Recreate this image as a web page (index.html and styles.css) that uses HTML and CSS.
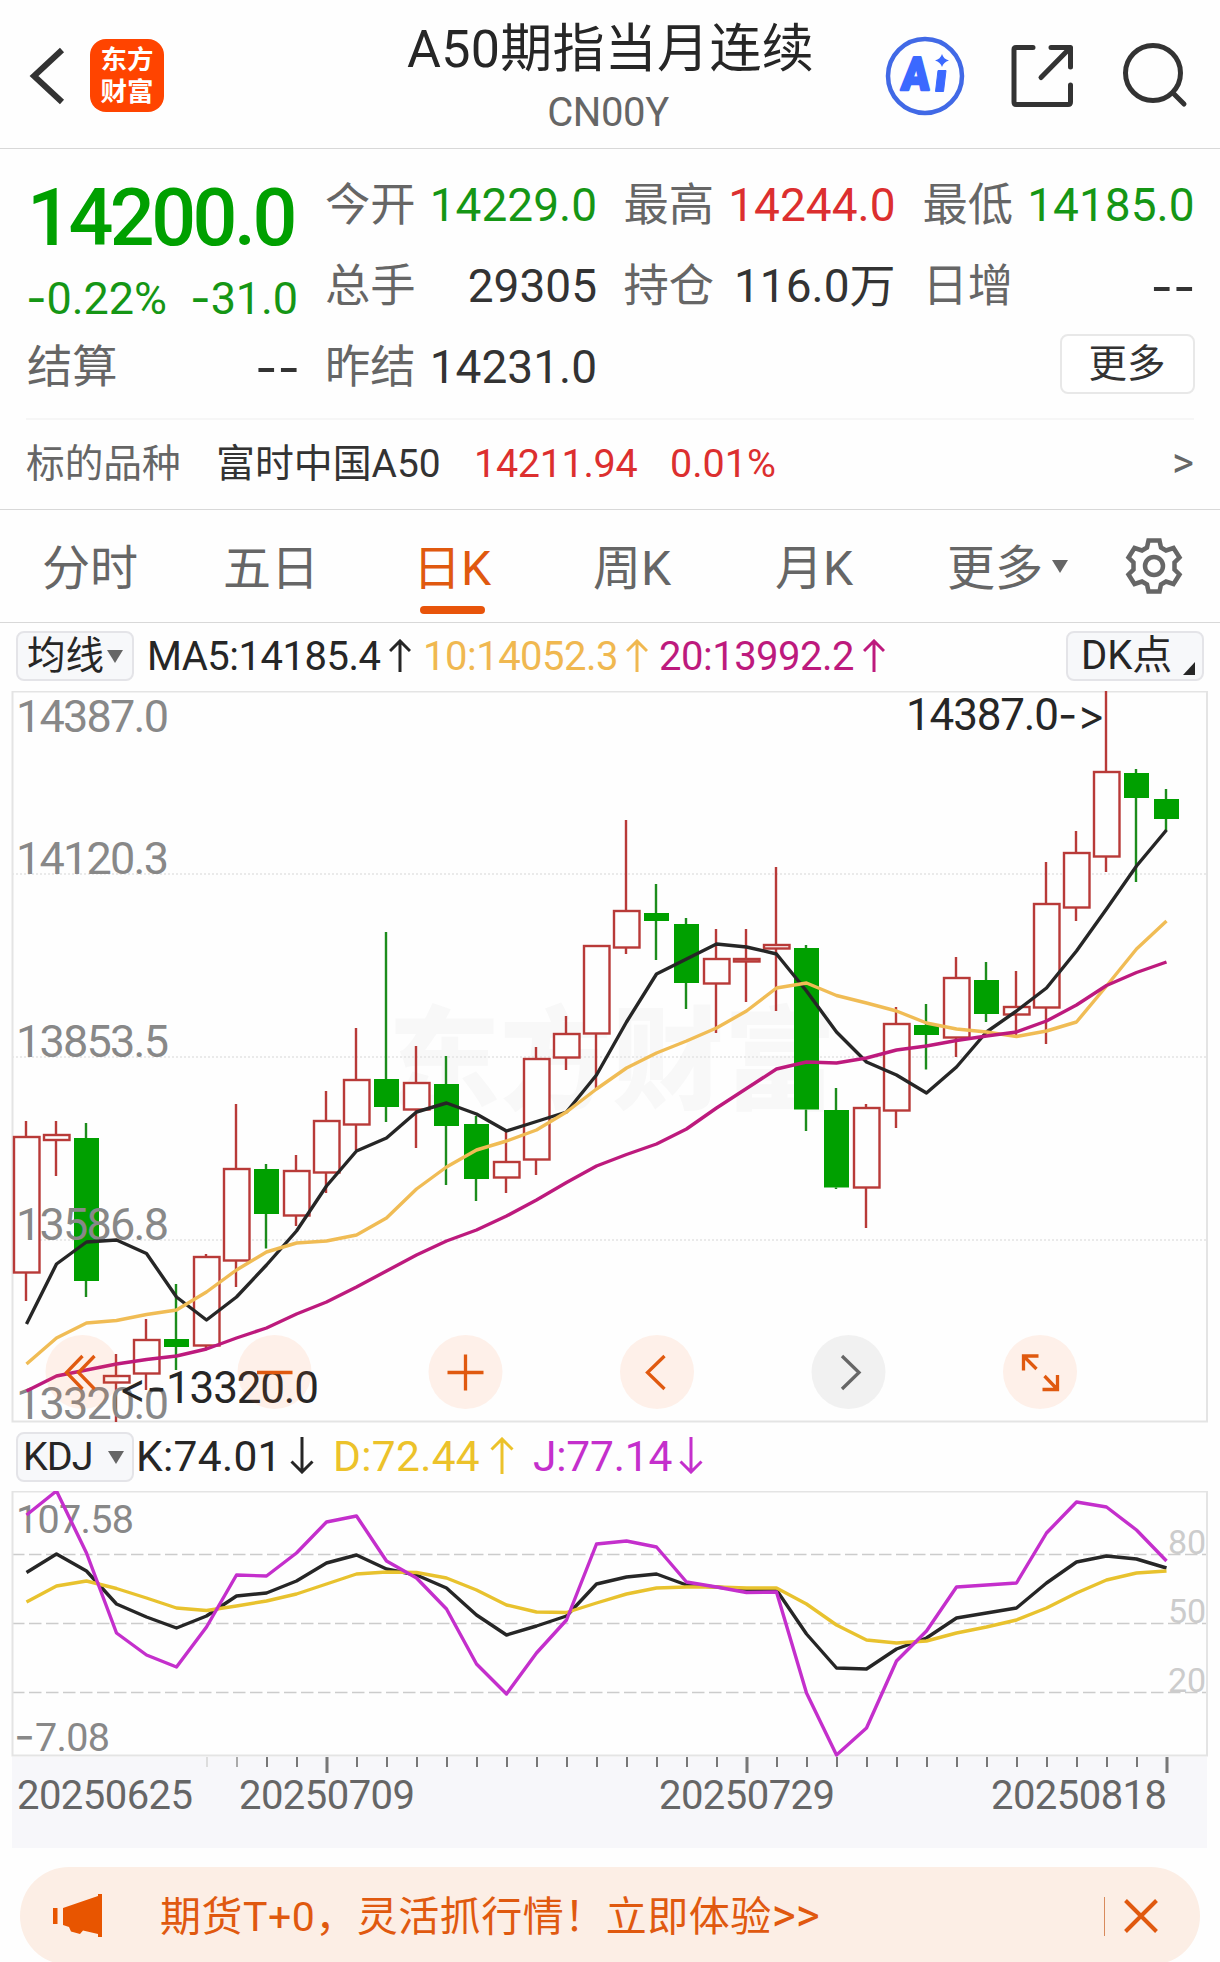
FILE: index.html
```
<!DOCTYPE html>
<html lang="zh-CN">
<head>
<meta charset="utf-8">
<title>A50期指当月连续</title>
<link rel="stylesheet" href="styles.css">
</head>
<body>
<div class="page">
  <header class="header">
    <svg class="back" width="40" height="64" viewBox="0 0 40 64"><path d="M36 6 L8 32 L36 58" transform="translate(-3 0)" fill="none" stroke="#333" stroke-width="6"/></svg>
    <div class="logo"><span>东方</span><span>财富</span></div>
    <div class="heading">
      <h1 class="title">A50期指当月连续</h1>
      <div class="code">CN00Y</div>
    </div>
    <svg class="actions" width="310" height="148" viewBox="880 0 310 148" fill="none">
      <circle cx="925" cy="76" r="37" stroke="#4169e6" stroke-width="4.5"/>
      <text class="ai" x="902" y="90" textLength="28" lengthAdjust="spacingAndGlyphs" transform="skewX(-4) translate(5 0)">A</text>
      <path d="M938 70.500H946L943.500 91.500H935.500Z" fill="#3b69ff" stroke="#3b69ff" stroke-linejoin="round"/>
      <path d="M942 54 Q943.500 59 949 60.500 Q943.500 62 942 67 Q940.500 62 935 60.500 Q940.500 59 942 54Z" fill="#3b69ff"/>
      <g stroke="#333" stroke-width="5" stroke-linecap="round" stroke-linejoin="round">
        <path d="M1033 47.500H1016Q1014 47.500 1014 49.500V102Q1014 104.500 1016 104.500H1068Q1070.500 104.500 1070.500 102V85"/>
        <path d="M1051 47.500H1070.500V67M1070 48L1041 77.500"/>
        <circle cx="1153" cy="73" r="27.500"/>
        <path d="M1174 94L1184 104"/>
      </g>
    </svg>
  </header>

  <section class="quote">
    <div class="last">
      <div class="price">14200.0</div>
      <div class="change"><span><i class="dash">-</i>0.22%</span><span><i class="dash">-</i>31.0</span></div>
    </div>
    <div class="cell c2"><label>今开</label><b class="down">14229.0</b></div>
    <div class="cell c3"><label>最高</label><b class="up">14244.0</b></div>
    <div class="cell c4"><label>最低</label><b class="down">14185.0</b></div>
    <div class="cell c2"><label>总手</label><b>29305</b></div>
    <div class="cell c3"><label>持仓</label><b>116.0万</b></div>
    <div class="cell c4"><label>日增</label><b class="dash">--</b></div>
    <div class="cell c1"><label>结算</label><b class="dash">--</b></div>
    <div class="cell c2"><label>昨结</label><b>14231.0</b></div>
    <button class="more">更多</button>
  </section>

  <section class="underlying">
    <span class="u-label">标的品种</span>
    <span class="u-name">富时中国A50</span>
    <span class="u-price">14211.94</span>
    <span class="u-pct">0.01%</span>
    <span class="u-go">&gt;</span>
  </section>

  <nav class="tabs">
    <span>分时</span><span>五日</span><span class="active">日K</span><span>周K</span><span>月K</span>
    <span class="tab-more">更多<i class="tri"></i></span>
    <svg width="58" height="58" viewBox="-29 -29 58 58" fill="none" stroke="#666" stroke-width="4.500">
      <path d="M-5.500 -25.500H5.500L7 -18.500L12 -15.500L19.500 -18L25.500 -8.500L20.500 -3.500V3.500L25.500 8.500L19.500 18L12 15.500L7 18.500L5.500 25.500H-5.500L-7 18.500L-12 15.500L-19.500 18L-25.500 8.500L-20.500 3.500V-3.500L-25.500 -8.500L-19.500 -18L-12 -15.500L-7 -18.500Z"/>
      <circle r="9"/>
    </svg>
  </nav>

  <div class="legend ma">
    <span class="chip">均线<i class="tri"></i></span>
    <span class="v ma5">MA5:14185.4<svg class="arr" viewBox="0 0 22 34"><path d="M11 33V2M1 12L11 2L21 12"/></svg></span>
    <span class="v ma10">10:14052.3<svg class="arr" viewBox="0 0 22 34"><path d="M11 33V2M1 12L11 2L21 12"/></svg></span>
    <span class="v ma20">20:13992.2<svg class="arr" viewBox="0 0 22 34"><path d="M11 33V2M1 12L11 2L21 12"/></svg></span>
    <span class="chip dk">DK点<i class="corner"></i></span>
  </div>

  <svg class="chart" id="kline" width="1220" height="732" viewBox="0 691 1220 732">
    <text class="mark" x="388" y="1101" textLength="448">东方财富</text>
    <g class="grid"><path d="M12 874H1207M12 1057H1207M12 1240H1207"/></g>
    <path class="frame" d="M12.500 691.500H1207V1421.500H12.500Z"/>
    <g id="candles"></g>
    <g class="axis">
      <text x="16" y="732" textLength="153">14387.0</text>
      <text x="16" y="873.500" textLength="153">14120.3</text>
      <text x="16" y="1056.500" textLength="153">13853.5</text>
      <text x="16" y="1240" textLength="153">13586.8</text>
      <text x="16" y="1419" textLength="153">13320.0</text>
    </g>
    <g id="averages"></g>
    <g class="extreme">
      <text x="906" y="730" textLength="153">14387.0</text><text class="sym" x="1058" y="730" textLength="47" lengthAdjust="spacingAndGlyphs">-&gt;</text>
      <text class="sym" x="119" y="1403" textLength="47" lengthAdjust="spacingAndGlyphs">&lt;-</text><text x="166" y="1403" textLength="153">13320.0</text>
    </g>
    <g class="tools">
      <circle cx="82.500" cy="1372" r="37"/><circle cx="274.500" cy="1372" r="37"/><circle cx="465.500" cy="1372" r="37"/><circle cx="657" cy="1372" r="37"/><circle class="off" cx="848.500" cy="1372" r="37"/><circle cx="1040" cy="1372" r="37"/>
      <path d="M82.500 1356L66.500 1372.500L82.500 1389M94.500 1356L78.500 1372.500L94.500 1389M257 1372.500H292.500M447.500 1372.500H483.500M465.500 1354.500V1390.500M664.500 1356L647.500 1372.500L664.500 1389"/>
      <path class="off" d="M842 1356L859 1372.500L842 1389"/>
      <path d="M1023.500 1370.500V1356H1038.500M1024 1356.500L1036.500 1369M1057.500 1375V1389.500H1042.500M1057 1389L1044.500 1376"/>
    </g>
  </svg>

  <div class="legend kdj">
    <span class="chip">KDJ<i class="tri"></i></span>
    <span class="v k">K:74.01<svg class="arr" viewBox="0 0 24 37"><path d="M12 0V35M1.500 24.500L12 35L22.500 24.500"/></svg></span>
    <span class="v d">D:72.44<svg class="arr" viewBox="0 0 24 37"><path d="M12 37V2M1.500 12.500L12 2L22.500 12.500"/></svg></span>
    <span class="v j">J:77.14<svg class="arr" viewBox="0 0 24 37"><path d="M12 0V35M1.500 24.500L12 35L22.500 24.500"/></svg></span>
  </div>

  <svg class="chart" width="1220" height="266" viewBox="0 1491 1220 266">
    <path class="levels" d="M12 1554.500H1207M12 1623.500H1207M12 1692.500H1207"/>
    <path class="frame" d="M12.500 1491.500H1207V1755.500H12.500Z"/>
    <g class="axis small">
      <text x="16" y="1532.500" textLength="118">107.58</text>
      <text class="sym" x="14" y="1751" textLength="21" lengthAdjust="spacingAndGlyphs">-</text><text x="35" y="1751" textLength="75">7.08</text>
    </g>
    <g class="axis level">
      <text x="1168" y="1554">80</text><text x="1168" y="1623">50</text><text x="1168" y="1692">20</text>
    </g>
    <g id="osc"></g>
  </svg>

  <svg class="dates" width="1195" height="91" viewBox="12 1757 1195 91">
    <g id="ticks"></g>
    <text x="17" y="1809" textLength="176">20250625</text>
    <text x="239" y="1809" textLength="176">20250709</text>
    <text x="659" y="1809" textLength="176">20250729</text>
    <text x="991" y="1809" textLength="176">20250818</text>
  </svg>

  <footer class="banner">
    <svg width="50" height="44" viewBox="0 0 50 44" fill="#e85500"><path d="M0 14H4.500V30H0ZM10 14L45 2V0H49V43H45V40L30 36.500L27 40L18 37.500L16 33L10 31Z"/></svg>
    <span class="promo">期货T+0，灵活抓行情！立即体验<span class="go">&gt;&gt;</span></span>
    <i class="sep"></i>
    <svg width="34" height="34" viewBox="0 0 34 34"><path d="M1.500 1.500L32.500 32.500M32.500 1.500L1.500 32.500" stroke="#e0590f" stroke-width="4"/></svg>
  </footer>
</div>
<script src="chart.js"></script>
</body>
</html>
```
FILE: styles.css
```
* { box-sizing: border-box; }
html, body { margin: 0; padding: 0; }
body {
  background: #fefefe;
  font-family: Roboto, "Noto Sans CJK SC", sans-serif;
  color: #333;
  overflow: hidden;
}
i, b { font-style: normal; font-weight: 400; }
.page { width: 1220px; height: 1962px; overflow: hidden; }
.dash { font-family: Inter, sans-serif; }
b.dash { font-size: 49px; letter-spacing: 0; margin-right: -1px; }

.header { display: flex; height: 149px; border-bottom: 1.5px solid #d8d8d8; }
.back { margin: 44px 0 0 29px; flex: none; }
.logo {
  flex: none; width: 74px; height: 73px; margin: 39px 0 0 21px; padding-top: 5px;
  display: flex; flex-direction: column; align-items: center;
  border-radius: 16px; background: #ff4400; color: #fff;
  font-size: 26.5px; font-weight: 700; line-height: 31.5px;
}
.heading { flex: none; width: 716px; text-align: center; padding-left: 172px; white-space: nowrap; }
.title { margin: 23px 0 0 5px; font-size: 52px; font-weight: 400; line-height: 54px; color: #262626; letter-spacing: .3px; }
.code { margin-top: 16px; font-size: 40px; line-height: 40px; color: #666; letter-spacing: -.4px; }
.actions { flex: none; display: block; }
.ai { font: 900 46px Roboto, sans-serif; fill: #3b69ff; stroke: #3b69ff; stroke-width: 2.5; stroke-linejoin: round; }

.quote {
  display: grid; height: 269px; padding: 15.5px 0 0 27px;
  grid-template-columns: 298px 298.5px 299px 270px; grid-template-rows: 81px 81px 81px;
}
.last { grid-row: 1 / span 2; width: 271px; color: #00a000; }
.price { font-size: 79px; font-weight: 500; line-height: 107px; letter-spacing: -3.5px; white-space: nowrap; }
.change { display: flex; justify-content: space-between; margin-left: -1px; font-size: 45px; line-height: 52px; letter-spacing: -.1px; color: #159615; }
.cell { display: flex; justify-content: space-between; line-height: 81px; width: 272px; font-size: 46px; }
.cell label { font-size: 45.3px; color: #666; }
.down { color: #159615; }
.up { color: #dc2f2f; }
.more {
  grid-column: 4; justify-self: end; width: 135px; height: 60px; margin: 7px -2px 0 0; padding: 0 0 1px;
  border: 2px solid #e8e8e8; border-radius: 8px; background: #fff; color: #333;
  font: 38.5px/55px Roboto, "Noto Sans CJK SC", sans-serif;
}

.underlying {
  display: flex; width: 1168px; height: 91px; margin-left: 26px; border-top: 2px solid #f6f6f6;
  font-size: 39.5px; line-height: 88px; white-space: nowrap;
}
.u-label { width: 190px; font-size: 38.7px; color: #666; }
.u-name { width: 258px; font-size: 38.9px; }
.u-price { width: 196px; color: #dc2f2f; letter-spacing: -.3px; }
.u-pct { color: #dc2f2f; }
.u-go { margin-left: auto; font-size: 42px; line-height: 86px; color: #666; }

.tabs {
  display: grid; grid-template-columns: 181px 190px 180px 182px 172px 178px 58px; height: 114px; padding-left: 42px;
  border-top: 1.5px solid #d8d8d8; border-bottom: 1.5px solid #d8d8d8;
  font-size: 48px; line-height: 117px; color: #666; white-space: nowrap;
}
.tabs svg { margin-top: 27px; }
.active { color: #e0590f; display: flex; flex-direction: column; }
.active::after { content: ""; width: 65px; height: 8px; margin: -21px 0 0 7px; border-radius: 4px; background: #e8540a; }
.tri { display: inline-block; border: 8px solid transparent; border-top: 13px solid #666; border-bottom: 0; }
.tab-more .tri { margin: 0 0 12px 9px; vertical-align: baseline; }

.legend { display: flex; position: relative; white-space: nowrap; font-size: 40px; color: #262626; }
.ma { height: 68px; padding: 8px 16px 0; line-height: 50px; }
.chip {
  display: flex; align-items: center; width: 118px; height: 50px; padding-left: 9px;
  background: #f7f8fa; border: 2px solid #e4e4e8; border-radius: 8px; font-size: 38.5px; line-height: 46px; flex: none;
}
.chip .tri { margin-left: 3px; }
.dk { width: 138px; margin-left: auto; padding-left: 13px; font-size: 40px; }
.corner { margin: 24px 0 0 11px; border-left: 12px solid transparent; border-bottom: 13px solid #262626; }
.v { display: flex; flex: none; letter-spacing: -.5px; }
.arr { width: 22px; height: 34px; margin: 8px 0 0 auto; fill: none; stroke: currentColor; stroke-width: 3; }
.ma5 { width: 264px; margin-left: 13px; line-height: 51px; }
.ma10 { width: 225px; margin-left: 12px; color: #f0b850; line-height: 51px; }
.ma20 { width: 226px; margin-left: 11px; color: #bd1a7d; line-height: 51px; }
.kdj { height: 68px; padding: 9px 16px 0; line-height: 50px; font-size: 42.5px; }
.kdj .chip { padding-left: 5px; font-size: 39.5px; letter-spacing: -1px; }
.kdj .tri { margin-left: auto; margin-right: 8px; }
.kdj .arr { width: 24px; height: 37px; margin-top: 5px; }
.kdj .v { letter-spacing: .3px; }
.k { width: 178px; margin-left: 2px; }
.d { width: 181px; margin-left: 19px; color: #ecc22a; }
.j { width: 170px; margin-left: 19px; color: #c42fcc; }
.kdj .j { letter-spacing: -.2px; }

.chart { display: block; font-size: 45px; }
.frame { fill: none; stroke: #e4e4e4; stroke-width: 2; }
.grid { stroke: #e4e4e4; stroke-width: 1.5; stroke-dasharray: 2 2; }
.levels { stroke: #ccc; stroke-width: 1.3; stroke-dasharray: 12.500 4.500; }
.axis { fill: #888; }
.small { font-size: 39.5px; }
.level { font-size: 34px; fill: #ccc; }
.extreme { fill: #262626; font-size: 44px; }
.sym { font-family: Inter, sans-serif; font-size: 42px; font-variant-ligatures: none; font-feature-settings: "calt" 0; }
.mark { font: 900 112px "Noto Sans CJK SC", sans-serif; fill: #f8f8f8; }
.up-bar { fill: #fefefe; stroke: #b83a38; stroke-width: 2.4; }
.up-wick { stroke: #b83a38; stroke-width: 2.4; }
.down-bar { fill: #00a000; }
.down-wick { stroke: #1c8c1c; stroke-width: 2.4; }
.line { fill: none; stroke-width: 3.4; stroke-linejoin: round; }
.tools circle { fill: #ff6a20; fill-opacity: .095; }
.tools circle.off { fill: #666; fill-opacity: .085; }
.tools path { fill: none; stroke: #e0590f; stroke-width: 3.3; }
.tools path.off { stroke: #666; }

.dates { display: block; margin-left: 12px; background: #f7f7fa; font-size: 40px; fill: #666; }

.banner {
  display: flex; align-items: center; width: 1180px; height: 98px; margin: 19px 0 0 20px; padding: 0 42px 0 33px;
  border-radius: 49px; background: #fceee5; color: #e0590f;
}
.promo { margin-left: 57px; font-size: 41px; line-height: 96px; letter-spacing: .5px; white-space: nowrap; }
.go { font-size: 46px; letter-spacing: 0; }
.sep { width: 1.5px; height: 39px; margin-left: auto; margin-right: 19px; background: #d88a5c; }
```
FILE: chart.js
```
(function () {
  var NS = 'http://www.w3.org/2000/svg';
  var x = function (i) { return 26 + 30 * i; };

  function add(parent, tag, attrs) {
    var el = document.createElementNS(NS, tag);
    for (var k in attrs) el.setAttribute(k, attrs[k]);
    document.getElementById(parent).appendChild(el);
  }

  // [rising, high, body top, body bottom, low]
  var candles = [
    [1,1121,1136,1273,1301],[1,1121,1134,1140.5,1176],[0,1123,1138,1281,1297],[1,1354,1375,1383,1422],
    [1,1319,1339,1374,1390],[0,1284,1339,1347,1370],[1,1254,1256,1346,1348],[1,1104,1168,1261,1287],
    [0,1164,1169,1214,1248.5],[1,1155,1170,1216,1226],[1,1091,1120,1173,1193],[1,1028,1079,1125,1150],
    [0,932,1079,1107,1122],[1,1046,1082,1110,1148],[0,1056,1084,1126,1185],[0,1116,1124,1179,1201],
    [1,1131,1161,1178,1193],[1,1047,1058,1160,1175],[1,1016,1033,1058,1070],[1,945,945,1034,1090],
    [1,820,910,948,954],[0,884,913,921,960],[0,918,924,983,1009],[1,929,958,984,1033],
    [1,929,958,962,1002],[1,867,944,949,1011],[0,945,948,1109.5,1131],[0,1088,1110,1187.5,1189],
    [1,1104,1107,1188,1228],[1,1007,1023,1111,1128],[0,1004,1025,1035,1069.5],[1,957,977,1038,1057],
    [0,962,980,1014,1022],[1,971,1006,1015,1035],[1,862,903,1008,1044],[1,831,852,908,921],
    [1,691,771,857,872],[0,769,773,798,882],[0,789,799,819,831]
  ];
  candles.forEach(function (c, i) {
    var cx = x(i), kind = c[0] ? 'up' : 'down';
    add('candles', 'path', { 'class': kind + '-wick', d: 'M' + cx + ' ' + c[1] + 'V' + c[2] + 'M' + cx + ' ' + c[3] + 'V' + c[4] });
    if (c[0]) add('candles', 'rect', { 'class': 'up-bar', x: cx - 12, y: c[2] + 1, width: 25.5, height: Math.max(c[3] - c[2] - 1.5, 1) });
    else add('candles', 'rect', { 'class': 'down-bar', x: cx - 12, y: c[2], width: 25, height: c[3] - c[2] });
  });

  function line(parent, color, ys) {
    var pts = ys.map(function (y, i) { return (x(i) + 0.5) + ',' + y; }).join(' ');
    add(parent, 'polyline', { 'class': 'line', stroke: color, points: pts });
  }
  line('averages', '#262626', [1324,1264,1242,1240,1253.5,1297,1320,1297,1265,1231,1186,1151,1138,1112,1103,1114,1131,1121.5,1112,1075,1022,974,959,944,947,954,991,1032,1062,1075,1093,1067,1032,1011,988,951,909,866,830]);
  line('averages', '#f0bc55', [1364,1338,1323,1320.5,1314.5,1310,1292,1270,1252,1243,1241,1235,1218,1189,1167,1150,1141,1130,1112,1089,1068,1053,1041,1028,1011,988,983,995.5,1003,1011,1023,1029,1032,1036.5,1031,1022,986,949,921]);
  line('averages', '#bd1a7d', [1391,1376,1370,1364,1359.5,1356,1349,1338,1328,1314,1302,1287,1271,1255,1241,1230,1216,1200,1182.5,1166,1154.5,1144,1129,1108,1088.5,1069,1062,1063,1058,1050,1046,1040.5,1036,1032,1021,1005,985.5,972.5,962]);

  line('osc', '#262626', [1572.5,1554,1571,1604,1617,1628,1616,1596,1593,1581,1563,1555,1569,1575,1588,1615,1635,1626,1616,1584,1577,1574,1585,1587,1590,1590,1634,1668,1669,1649,1638,1618,1613,1608,1583,1562,1556,1559,1568]);
  line('osc', '#e8c22e', [1602,1586,1581,1588.5,1598,1608,1610.5,1606,1601,1594,1584,1574,1572,1572.5,1578,1590,1605,1612,1612.5,1603,1594,1588,1587,1587,1588,1588,1604,1625,1640,1643,1641,1633,1627,1620,1608,1593,1580,1573,1571]);
  line('osc', '#c42fcc', [1515,1491,1553,1633,1655,1667,1627,1575,1576,1553,1522,1516,1561,1578,1609,1664,1694,1653,1620,1544,1541,1547,1582,1587,1592.5,1592,1693,1755,1728,1661,1631,1587,1585,1583,1533,1502,1507,1530,1561]);

  for (var i = 6; i < 39; i++) {
    var major = i === 10 || i === 24 || i === 38;
    add('ticks', 'rect', { x: x(i) + (major ? -0.5 : 0), y: 1757, width: major ? 3 : 2, height: major ? 16 : 10, fill: i === 6 ? '#ddd' : i === 7 ? '#aaa' : '#777' });
  }
})();
```
